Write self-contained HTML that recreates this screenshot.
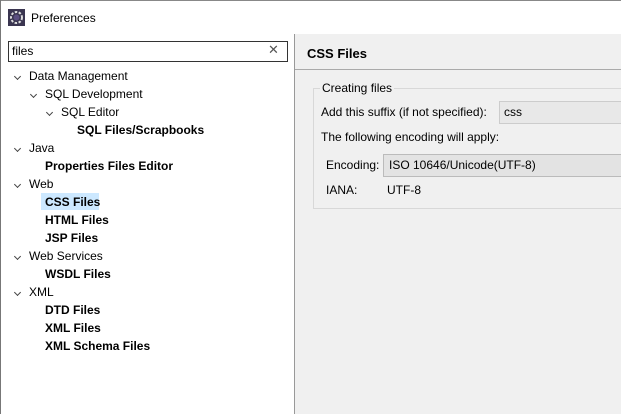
<!DOCTYPE html>
<html><head><style>
body{margin:0;width:621px;height:414px;overflow:hidden;background:#fff;font-family:"Liberation Sans","Noto Sans CJK KR",sans-serif;font-size:12px;color:#000;position:relative}
.a{position:absolute;white-space:nowrap}
.b{font-weight:bold}
.chev{position:absolute;width:4px;height:4px;border-right:1.4px solid #444;border-bottom:1.4px solid #444;transform:rotate(45deg)}
</style></head><body>
<div class="a" style="left:0;top:0;width:621px;height:1px;background:#888"></div>
<div class="a" style="left:0;top:0;width:1px;height:414px;background:#777"></div>
<svg class="a" style="left:8px;top:9px" width="17" height="17" viewBox="0 0 17 17"><rect x="0" y="0" width="17" height="17" fill="#3a3550"/><circle cx="8.5" cy="8.5" r="5.5" fill="none" stroke="#ddd" stroke-width="2" stroke-dasharray="2.5 1.5"/><circle cx="8.5" cy="8.5" r="3" fill="#5b4f80"/></svg>
<div class="a" style="left:31px;top:11px">Preferences</div>
<div class="a" style="left:8px;top:41px;width:278px;height:19px;border:1px solid #333;background:#fff"></div>
<div class="a" style="left:12px;top:44px">files</div>
<div class="a" style="left:268px;top:42px;color:#555;font-size:13px">✕</div>
<div class="a" style="left:41px;top:193px;width:58px;height:17px;background:#cce8ff"></div>
<div class="chev" style="left:15px;top:74px"></div><div class="a" style="left:29px;top:69px">Data Management</div>
<div class="chev" style="left:31px;top:92px"></div><div class="a" style="left:45px;top:87px">SQL Development</div>
<div class="chev" style="left:47px;top:110px"></div><div class="a" style="left:61px;top:105px">SQL Editor</div>
<div class="a b" style="left:77px;top:123px">SQL Files/Scrapbooks</div>
<div class="chev" style="left:15px;top:146px"></div><div class="a" style="left:29px;top:141px">Java</div>
<div class="a b" style="left:45px;top:159px">Properties Files Editor</div>
<div class="chev" style="left:15px;top:182px"></div><div class="a" style="left:29px;top:177px">Web</div>
<div class="a b" style="left:45px;top:195px">CSS Files</div>
<div class="a b" style="left:45px;top:213px">HTML Files</div>
<div class="a b" style="left:45px;top:231px">JSP Files</div>
<div class="chev" style="left:15px;top:254px"></div><div class="a" style="left:29px;top:249px">Web Services</div>
<div class="a b" style="left:45px;top:267px">WSDL Files</div>
<div class="chev" style="left:15px;top:290px"></div><div class="a" style="left:29px;top:285px">XML</div>
<div class="a b" style="left:45px;top:303px">DTD Files</div>
<div class="a b" style="left:45px;top:321px">XML Files</div>
<div class="a b" style="left:45px;top:339px">XML Schema Files</div>
<div class="a" style="left:294px;top:34px;width:327px;height:380px;background:#f0f0f0;border-left:1px solid #999"></div>
<div class="a b" style="left:307px;top:46px;font-size:13px">CSS Files</div>
<div class="a" style="left:295px;top:69px;width:326px;height:1px;background:#aaa"></div>
<div class="a" style="left:313px;top:88px;width:320px;height:119px;border:1px solid #d8d8d8"></div>
<div class="a" style="left:320px;top:81px;background:#f0f0f0;padding:0 2px">Creating files</div>
<div class="a" style="left:321px;top:105px">Add this suffix (if not specified):</div>
<div class="a" style="left:499px;top:101px;width:130px;height:21px;background:#e8e8e8;border:1px solid #ccc"></div>
<div class="a" style="left:504px;top:105px">css</div>
<div class="a" style="left:321px;top:130px">The following encoding will apply:</div>
<div class="a" style="left:326px;top:158px">Encoding:</div>
<div class="a" style="left:383px;top:154px;width:245px;height:21px;background:#e3e3e3;border:1px solid #bbb"></div>
<div class="a" style="left:389px;top:158px">ISO 10646/Unicode(UTF-8)</div>
<div class="a" style="left:326px;top:183px">IANA:</div>
<div class="a" style="left:387px;top:183px">UTF-8</div>
</body></html>
